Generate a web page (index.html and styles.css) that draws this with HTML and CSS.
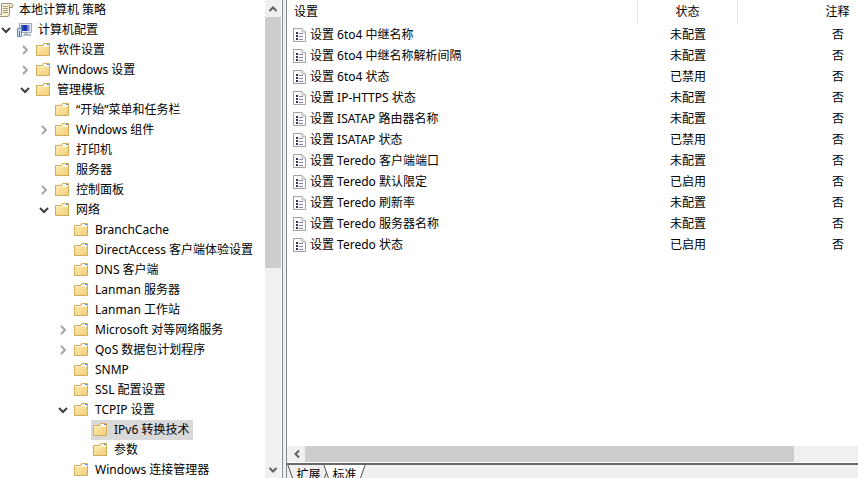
FILE: index.html
```
<!DOCTYPE html>
<html lang="zh-CN">
<head>
  <meta charset="UTF-8" />
  <meta name="viewport" content="width=device-width, initial-scale=1.0" />
  <title>本地组策略编辑器</title>
  <link rel="stylesheet" href="styles.css">
</head>
<body>
  <svg class="sprite" aria-hidden="true">
    <defs>
      <linearGradient id="folder-fill" x1="0" y1="0" x2="1" y2="1">
        <stop offset="0" stop-color="#ffeab0" />
        <stop offset="1" stop-color="#f0cf7c" />
      </linearGradient>
      <linearGradient id="screen-fill" x1="0" y1="0" x2="1" y2="0">
        <stop offset="0" stop-color="#3a5fd0" />
        <stop offset="0.5" stop-color="#1226a8" />
        <stop offset="1" stop-color="#a9bdf0" />
      </linearGradient>
      <symbol id="folder" viewBox="0 0 16 16">
        <path d="M1.5 3.5 H7.5 L8.5 1.5 H14.5 V13.5 H1.5 Z" fill="url(#folder-fill)" stroke="#d3ac57" />
        <path d="M9 2 h5 v2 h-5 z" fill="#fff" />
        <path d="M12 2 h2 v1 h-2 z" fill="#3b8fd6" />
        <path d="M2 4.5 H8 L9 4.5 H14" fill="none" stroke="#fff3cc" />
      </symbol>
      <symbol id="setting" viewBox="0 0 13 16">
        <path d="M0.5 1.5 H9 L12.5 5 V14.5 H0.5 Z" fill="#fbfbfb" stroke="#a3a3a3" />
        <path d="M9 1.5 V5 H12.5" fill="#e4e4e4" stroke="#b5b5b5" />
        <path d="M3 5h2v2H3z M3 8h2v2H3z M3 11h2v2H3z" fill="#33334a" />
        <path d="M6 6.5 h4 M6 9.5 h4 M6 12.5 h4" stroke="#8585ad" />
      </symbol>
      <symbol id="scroll" viewBox="0 0 16 16">
        <path d="M4.5 1.5 H14 Q15.5 1.5 15.5 3.5 V5.5 H12.5 V12 Q12.5 14.5 10 14.5 H2 V12.5 H4.5 Z" fill="#f8f0d4" stroke="#a09474" />
        <path d="M6 4.5 h5 M6 6.5 h5 M6 8.5 h5 M6 10.5 h5" stroke="#a39c8c" />
        <path d="M12.5 6 V3" stroke="#a09474" />
      </symbol>
      <symbol id="computer" viewBox="0 0 16 16">
        <path d="M3.5 1.5 H15.5 V10.5 H3.5 Z" fill="#e6e9f0" stroke="#a2a8b8" />
        <path d="M5 3 h9 v6 H5 z" fill="url(#screen-fill)" />
        <path d="M8 11 h4 v1 h3 v2 H7 z" fill="#b4b9c4" />
        <path d="M1.5 6.5 h4 v8 h-4 z" fill="#c9dcf0" stroke="#6a8db8" />
        <path d="M3 9 h1 v5 h-1 z" fill="#4f79b5" />
      </symbol>
      <symbol id="chevron-down" viewBox="0 0 12 12">
        <path d="M2 4 L6 8 L10 4" fill="none" stroke="#404040" stroke-width="2" />
      </symbol>
      <symbol id="chevron-right" viewBox="0 0 12 12">
        <path d="M4 2 L8 6 L4 10" fill="none" stroke="#a6a6a6" stroke-width="2" />
      </symbol>
      <symbol id="arrow" viewBox="0 0 12 12">
        <path d="M2.5 8 L6 4.5 L9.5 8" fill="none" stroke="#606060" stroke-width="2" />
      </symbol>
      <symbol id="tab-shape" viewBox="0 0 43 20">
        <path d="M0.5 -1 L8 20 H35 L42.5 -1" />
      </symbol>
    </defs>
  </svg>

  <main class="console">
    <nav class="tree-pane" aria-label="控制台树">
      <ul class="tree">
        <li>
          <div class="node"><span class="twisty"></span><a href="#" class="item"><svg class="icon"><use href="#scroll" /></svg>本地计算机 策略</a></div>
          <ul>
            <li>
              <div class="node"><button class="twisty" aria-label="折叠"><svg><use href="#chevron-down" /></svg></button><a href="#" class="item"><svg class="icon"><use href="#computer" /></svg>计算机配置</a></div>
              <ul>
                <li><div class="node"><button class="twisty" aria-label="展开"><svg><use href="#chevron-right" /></svg></button><a href="#" class="item"><svg class="icon"><use href="#folder" /></svg>软件设置</a></div></li>
                <li><div class="node"><button class="twisty" aria-label="展开"><svg><use href="#chevron-right" /></svg></button><a href="#" class="item"><svg class="icon"><use href="#folder" /></svg>Windows 设置</a></div></li>
                <li>
                  <div class="node"><button class="twisty" aria-label="折叠"><svg><use href="#chevron-down" /></svg></button><a href="#" class="item"><svg class="icon"><use href="#folder" /></svg>管理模板</a></div>
                  <ul>
                    <li><div class="node"><span class="twisty"></span><a href="#" class="item"><svg class="icon"><use href="#folder" /></svg>“开始”菜单和任务栏</a></div></li>
                    <li><div class="node"><button class="twisty" aria-label="展开"><svg><use href="#chevron-right" /></svg></button><a href="#" class="item"><svg class="icon"><use href="#folder" /></svg>Windows 组件</a></div></li>
                    <li><div class="node"><span class="twisty"></span><a href="#" class="item"><svg class="icon"><use href="#folder" /></svg>打印机</a></div></li>
                    <li><div class="node"><span class="twisty"></span><a href="#" class="item"><svg class="icon"><use href="#folder" /></svg>服务器</a></div></li>
                    <li><div class="node"><button class="twisty" aria-label="展开"><svg><use href="#chevron-right" /></svg></button><a href="#" class="item"><svg class="icon"><use href="#folder" /></svg>控制面板</a></div></li>
                    <li>
                      <div class="node"><button class="twisty" aria-label="折叠"><svg><use href="#chevron-down" /></svg></button><a href="#" class="item"><svg class="icon"><use href="#folder" /></svg>网络</a></div>
                      <ul>
                        <li><div class="node"><span class="twisty"></span><a href="#" class="item"><svg class="icon"><use href="#folder" /></svg>BranchCache</a></div></li>
                        <li><div class="node"><span class="twisty"></span><a href="#" class="item"><svg class="icon"><use href="#folder" /></svg>DirectAccess 客户端体验设置</a></div></li>
                        <li><div class="node"><span class="twisty"></span><a href="#" class="item"><svg class="icon"><use href="#folder" /></svg>DNS 客户端</a></div></li>
                        <li><div class="node"><span class="twisty"></span><a href="#" class="item"><svg class="icon"><use href="#folder" /></svg>Lanman 服务器</a></div></li>
                        <li><div class="node"><span class="twisty"></span><a href="#" class="item"><svg class="icon"><use href="#folder" /></svg>Lanman 工作站</a></div></li>
                        <li><div class="node"><button class="twisty" aria-label="展开"><svg><use href="#chevron-right" /></svg></button><a href="#" class="item"><svg class="icon"><use href="#folder" /></svg>Microsoft 对等网络服务</a></div></li>
                        <li><div class="node"><button class="twisty" aria-label="展开"><svg><use href="#chevron-right" /></svg></button><a href="#" class="item"><svg class="icon"><use href="#folder" /></svg>QoS 数据包计划程序</a></div></li>
                        <li><div class="node"><span class="twisty"></span><a href="#" class="item"><svg class="icon"><use href="#folder" /></svg>SNMP</a></div></li>
                        <li><div class="node"><span class="twisty"></span><a href="#" class="item"><svg class="icon"><use href="#folder" /></svg>SSL 配置设置</a></div></li>
                        <li>
                          <div class="node"><button class="twisty" aria-label="折叠"><svg><use href="#chevron-down" /></svg></button><a href="#" class="item"><svg class="icon"><use href="#folder" /></svg>TCPIP 设置</a></div>
                          <ul>
                            <li><div class="node"><span class="twisty"></span><a href="#" class="item selected"><svg class="icon"><use href="#folder" /></svg>IPv6 转换技术</a></div></li>
                            <li><div class="node"><span class="twisty"></span><a href="#" class="item"><svg class="icon"><use href="#folder" /></svg>参数</a></div></li>
                          </ul>
                        </li>
                        <li><div class="node"><span class="twisty"></span><a href="#" class="item"><svg class="icon"><use href="#folder" /></svg>Windows 连接管理器</a></div></li>
                      </ul>
                    </li>
                  </ul>
                </li>
              </ul>
            </li>
          </ul>
        </li>
      </ul>
      <div class="scrollbar vertical">
        <button class="up" aria-label="向上滚动"><svg><use href="#arrow" /></svg></button>
        <div class="track"><div class="thumb"></div></div>
        <button class="down" aria-label="向下滚动"><svg><use href="#arrow" /></svg></button>
      </div>
    </nav>

    <div class="splitter"></div>

    <section class="detail-pane">
      <div class="list">
        <table>
          <colgroup>
            <col class="col-name">
            <col class="col-state">
            <col class="col-comment">
          </colgroup>
          <thead>
            <tr><th>设置</th><th>状态</th><th>注释</th></tr>
          </thead>
          <tbody>
            <tr><td><svg class="doc"><use href="#setting" /></svg>设置 6to4 中继名称</td><td>未配置</td><td>否</td></tr>
            <tr><td><svg class="doc"><use href="#setting" /></svg>设置 6to4 中继名称解析间隔</td><td>未配置</td><td>否</td></tr>
            <tr><td><svg class="doc"><use href="#setting" /></svg>设置 6to4 状态</td><td>已禁用</td><td>否</td></tr>
            <tr><td><svg class="doc"><use href="#setting" /></svg>设置 IP-HTTPS 状态</td><td>未配置</td><td>否</td></tr>
            <tr><td><svg class="doc"><use href="#setting" /></svg>设置 ISATAP 路由器名称</td><td>未配置</td><td>否</td></tr>
            <tr><td><svg class="doc"><use href="#setting" /></svg>设置 ISATAP 状态</td><td>已禁用</td><td>否</td></tr>
            <tr><td><svg class="doc"><use href="#setting" /></svg>设置 Teredo 客户端端口</td><td>未配置</td><td>否</td></tr>
            <tr><td><svg class="doc"><use href="#setting" /></svg>设置 Teredo 默认限定</td><td>已启用</td><td>否</td></tr>
            <tr><td><svg class="doc"><use href="#setting" /></svg>设置 Teredo 刷新率</td><td>未配置</td><td>否</td></tr>
            <tr><td><svg class="doc"><use href="#setting" /></svg>设置 Teredo 服务器名称</td><td>未配置</td><td>否</td></tr>
            <tr><td><svg class="doc"><use href="#setting" /></svg>设置 Teredo 状态</td><td>已启用</td><td>否</td></tr>
          </tbody>
        </table>
      </div>
      <div class="scrollbar horizontal">
        <button class="left" aria-label="向左滚动"><svg><use href="#arrow" /></svg></button>
        <div class="track"><div class="thumb"></div></div>
      </div>
      <div class="tabs">
        <button class="tab"><svg class="tab-shape"><use href="#tab-shape" /></svg>扩展</button>
        <button class="tab active"><svg class="tab-shape"><use href="#tab-shape" /></svg>标准</button>
      </div>
    </section>
  </main>
</body>
</html>
```
FILE: styles.css
```
* {
  box-sizing: border-box;
}
body {
  margin: 0;
  font-family: "Noto Sans", "Noto Sans CJK SC", sans-serif;
  font-size: 12px;
  line-height: 20px;
  color: #000;
  background-color: #fff;
}
button {
  padding: 0;
  border: none;
  background: none;
  font: inherit;
  color: inherit;
}
.sprite {
  position: absolute;
  width: 0;
  height: 0;
}
.console {
  display: flex;
  height: 100vh;
  overflow: hidden;
}

/* tree */
.tree-pane {
  display: flex;
  flex: 0 0 282px;
  overflow: hidden;
}
.tree, .tree ul {
  list-style: none;
  margin: 0;
  padding: 0;
}
.tree {
  flex: 1;
  min-width: 0;
  margin-left: -19px;
}
.tree ul {
  padding-left: 19px;
}
.node {
  display: flex;
  height: 20px;
  gap: 3px;
}
.twisty {
  display: flex;
  align-items: center;
  width: 12px;
}
.twisty svg, .scrollbar svg {
  display: block;
  width: 12px;
  height: 12px;
}
.item {
  display: flex;
  align-items: center;
  gap: 6px;
  padding: 0 4px 0 1px;
  color: inherit;
  text-decoration: none;
  white-space: nowrap;
}
.item.selected {
  background-color: #d9d9d9;
}
.icon {
  width: 16px;
  height: 16px;
}

/* scrollbars */
.scrollbar {
  display: flex;
  background-color: #f0f0f0;
}
.scrollbar button {
  display: flex;
  align-items: center;
  justify-content: center;
  flex: 0 0 17px;
}
.track {
  flex: 1;
}
.thumb {
  background-color: #cdcdcd;
}
.vertical {
  flex-direction: column;
  width: 17px;
  border-right: 1px solid #fff;
}
.vertical .thumb {
  height: 56.5%;
}
.down svg {
  transform: rotate(180deg);
}
.left svg {
  transform: rotate(-90deg);
}
.horizontal {
  height: 17px;
  padding-left: 1px;
  border-bottom: 1px solid #fff;
}
.horizontal .thumb {
  width: 88.5%;
  height: 100%;
}

.splitter {
  flex: 0 0 5px;
  border: solid #828790;
  border-width: 0 1px;
  background-color: #f0f0f0;
}

/* settings list */
.detail-pane {
  display: flex;
  flex: 1;
  flex-direction: column;
  min-width: 0;
}
.list {
  flex: 1;
  min-height: 0;
  overflow: hidden;
}
table {
  width: 651px;
  table-layout: fixed;
  border-collapse: separate;
  border-spacing: 0;
}
.col-name {
  width: 351px;
}
.col-state {
  width: 100px;
}
th, td {
  height: 21px;
  padding: 0;
  text-align: center;
  font-weight: normal;
}
th {
  height: 24px;
  border-right: 1px solid #e5e5e5;
}
th:first-child {
  padding-left: 7px;
  text-align: left;
}
td:first-child {
  display: flex;
  align-items: center;
  gap: 4px;
  padding-left: 6px;
}
.doc {
  width: 13px;
  height: 16px;
}

/* view tabs */
.tabs {
  display: flex;
  height: 15px;
  border-top: 2px solid #696969;
  background-color: #f0f0f0;
  overflow: hidden;
}
.tab {
  position: relative;
  isolation: isolate;
  width: 43px;
  height: 20px;
}
.tab.active {
  margin-left: -7px;
}
.tab-shape {
  position: absolute;
  top: 0;
  left: 0;
  z-index: -1;
  width: 100%;
  height: 100%;
  fill: #f0f0f0;
  stroke: #505050;
}
.active .tab-shape {
  fill: #fff;
}
```
